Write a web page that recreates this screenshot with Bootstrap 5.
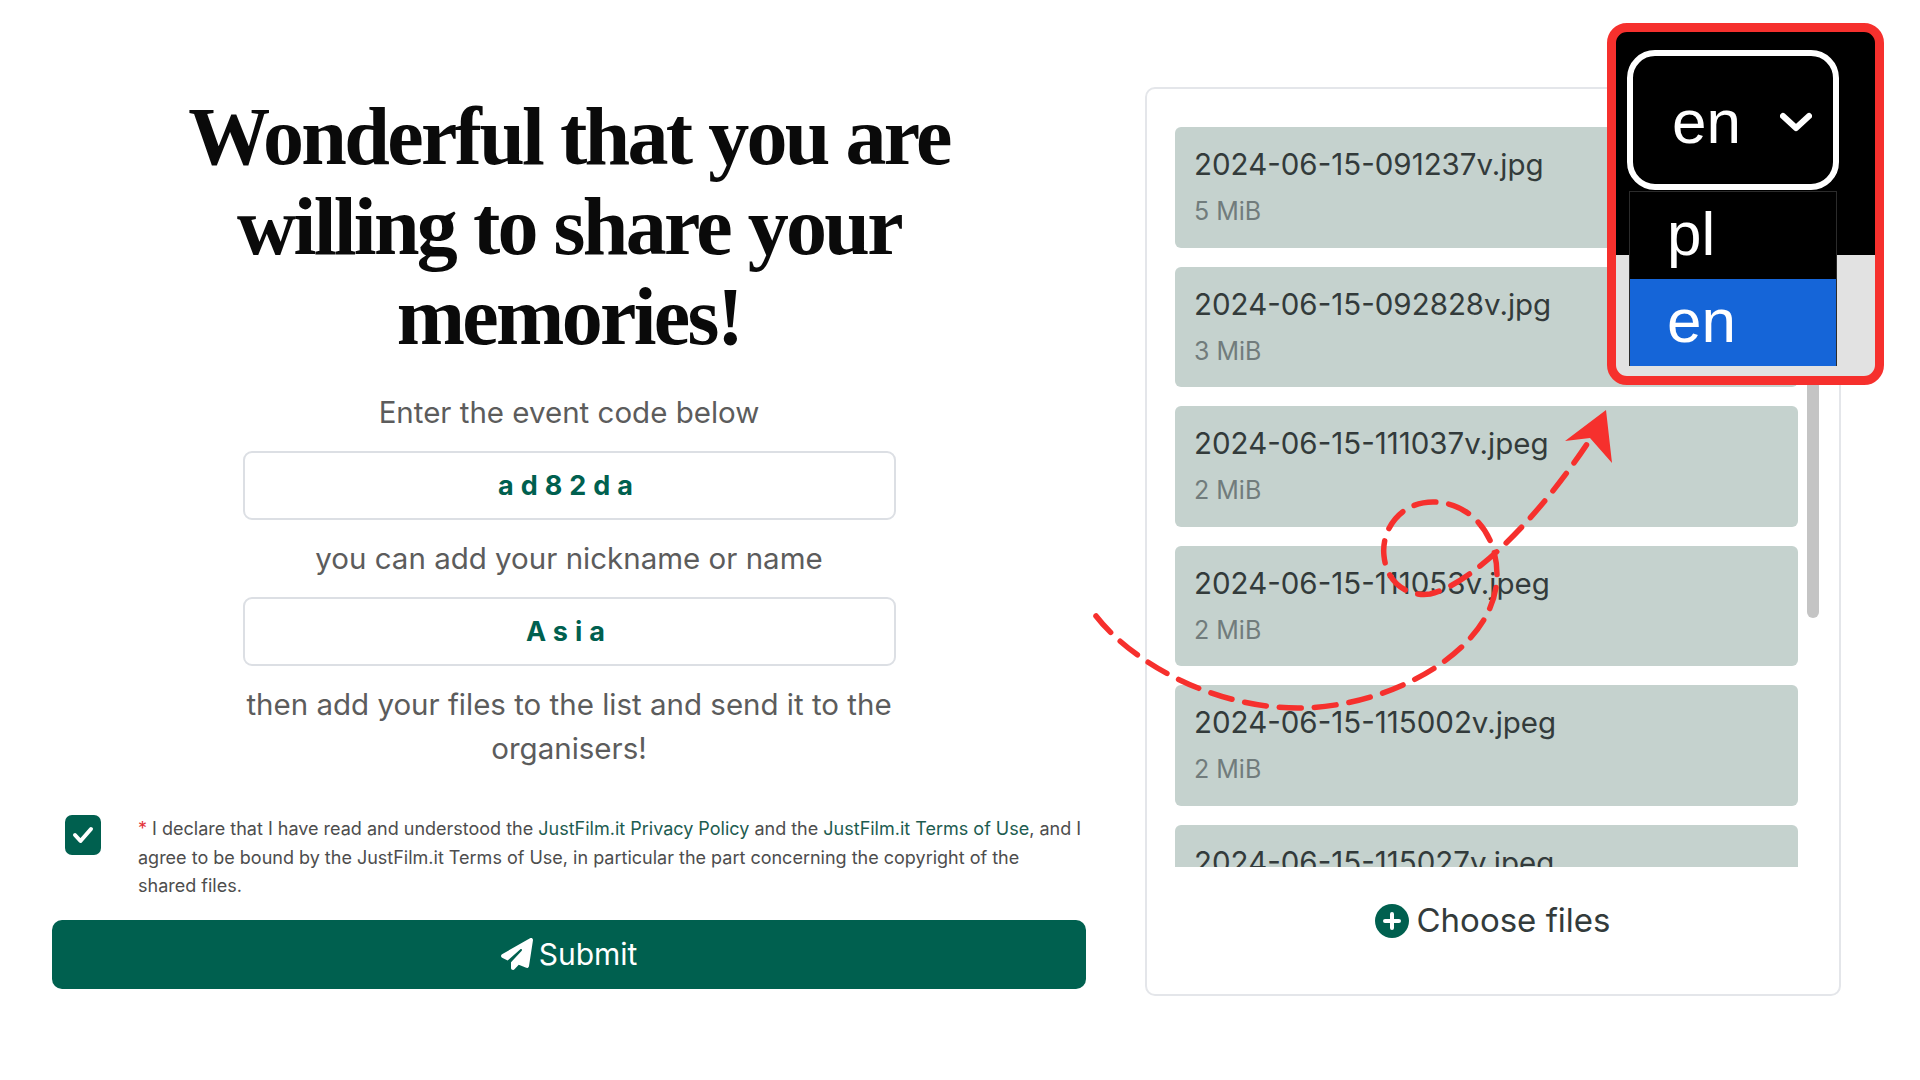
<!DOCTYPE html>
<html lang="en">
<head>
  <meta charset="UTF-8">
  <title>Share your memories</title>
  <link href="https://cdn.jsdelivr.net/npm/bootstrap@5.3.3/dist/css/bootstrap.min.css" rel="stylesheet">
  <style>
    body {
      background: #fff;
      font-family: "Inter", "Noto Sans", sans-serif;
      color: #5c5c5c;
      height: 1080px;
      overflow: hidden;
    }
    .page-wrap {
      padding: 87px 79px 0 52px;
      gap: 59px;
    }
    .share-col {
      width: 1034px;
      padding-top: 5px;
    }
    .share-title {
      font-family: "Liberation Serif", serif;
      font-weight: 700;
      font-size: 82px;
      line-height: 90px;
      letter-spacing: -2.7px;
      color: #0a0a0a;
      margin: 0 0 28px;
    }
    .share-hint {
      font-size: 29.5px;
      line-height: 44px;
      margin: 0;
    }
    .code-input.form-control {
      width: 653px;
      height: 69px;
      margin: 17px auto 16px;
      border-radius: 9px;
      text-align: center;
      font-size: 27px;
      font-weight: 700;
      letter-spacing: 7px;
      color: #00604f;
      border: 2px solid #dcdfe4;
    }
    .consent-row {
      margin-top: 45px;
      padding-left: 13px;
      gap: 37px;
    }
    .consent-box {
      width: 36px;
      height: 40px;
      background: #00604f;
      border-radius: 7px;
    }
    .consent-text {
      font-size: 18px;
      line-height: 28.5px;
      margin: 0;
      color: #4d4d4d;
    }
    .consent-text i {
      color: #e3333a;
      font-style: normal;
    }
    .consent-text a {
      color: #1d5c50;
      text-decoration: none;
    }
    .send-btn.btn {
      width: 100%;
      height: 69px;
      margin-top: 19px;
      background: #00604f;
      border: 0;
      border-radius: 10px;
      color: #fff;
      font-size: 30px;
      gap: 6px;
    }
    .files-panel {
      width: 696px;
      height: 909px;
      border: 2px solid #e4e6ea;
      border-radius: 10px;
      padding: 38px 20px 0 28px;
    }
    .files-scroll {
      height: 740px;
      gap: 9px;
    }
    .files-list {
      width: 624px;
      gap: 19px;
      overflow: hidden;
    }
    .file-item {
      flex: 0 0 120.6px;
      background: #c5d2ce;
      border-radius: 6px;
      padding: 19px 19px;
    }
    .file-name {
      font-size: 29.5px;
      line-height: 36px;
      color: #333b3b;
    }
    .file-size {
      font-size: 25px;
      line-height: 30px;
      margin-top: 14px;
      color: #717c7c;
    }
    .scroll-thumb {
      width: 12px;
      height: 491px;
      background: #c4c4c4;
      border-radius: 6px;
    }
    .choose-btn {
      margin-top: 29px;
      padding-right: 9px;
      gap: 8px;
      font-size: 33px;
      color: #333b3b;
    }
    .lang-frame {
      position: absolute;
      left: 1607px;
      top: 23px;
      width: 277px;
      height: 362px;
      border: 9px solid #f6302d;
      border-radius: 20px;
      overflow: hidden;
      background: linear-gradient(#000 223px, #e2e2e2 223px);
      font-family: "Liberation Sans", Arial, sans-serif;
      color: #fff;
      font-size: 62px;
      line-height: 1;
    }
    .lang-select {
      margin: 18px 0 0 11px;
      width: 212px;
      height: 140px;
      border: 6px solid #fff;
      border-radius: 28px;
      padding: 4px 21px 0 39px;
    }
    .lang-menu {
      margin: 1px 0 0 13px;
      width: 208px;
      border: solid #2b2b2b;
      border-width: 1px 1px 0;
    }
    .lang-opt {
      height: 87px;
      padding: 0 0 4px 37px;
      background: #000;
    }
    .lang-opt.is-active {
      background: #1565d8;
    }
    .arrow-layer {
      position: absolute;
      left: 0;
      top: 0;
      pointer-events: none;
    }
  </style>
</head>
<body>
  <div class="page-wrap d-flex align-items-start">
    <div class="share-col text-center">
      <h1 class="share-title">Wonderful that you are<br>willing to share your<br>memories!</h1>
      <p class="share-hint">Enter the event code below</p>
      <input type="text" class="form-control code-input" value="ad82da">
      <p class="share-hint">you can add your nickname or name</p>
      <input type="text" class="form-control code-input" value="Asia">
      <p class="share-hint">then add your files to the list and send it to the<br>organisers!</p>

      <div class="consent-row d-flex text-start">
        <div class="consent-box flex-shrink-0 d-flex align-items-center justify-content-center">
          <svg width="22" height="20" viewBox="0 0 22 20"><path d="M3 10l5.5 6L19 4" fill="none" stroke="#fff" stroke-width="4" stroke-linecap="round" stroke-linejoin="round"/></svg>
        </div>
        <p class="consent-text"><i>*</i> I declare that I have read and understood the <a href="#">JustFilm.it Privacy Policy</a> and the <a href="#">JustFilm.it Terms of Use</a>, and I agree to be bound by the JustFilm.it Terms of Use, in particular the part concerning the copyright of the<br>shared files.</p>
      </div>

      <button type="button" class="btn send-btn d-flex align-items-center justify-content-center">
        <svg width="32" height="32" viewBox="0 0 512 512"><path fill="#fff" d="M498.1 5.6c10.1 7 15.4 19.1 13.5 31.2l-64 416c-1.5 9.7-7.4 18.2-16 23s-18.9 5.4-28 1.6L284 427.7l-68.5 74.1c-8.9 9.7-22.9 12.9-35.2 8.1S160 493.2 160 480V396.4c0-4 1.5-7.8 4.2-10.7L331.8 202.8c5.8-6.3 5.6-16-.4-22s-15.7-6.4-22-.7L106 360.8 17.7 316.6C7.1 311.3 .3 300.7 0 288.9s5.9-22.8 16.1-28.7l448-256c10.7-6.1 23.9-5.5 34 1.4z"/></svg>
        Submit
      </button>
    </div>

    <div class="files-panel">
      <div class="files-scroll d-flex align-items-start">
        <div class="files-list d-flex flex-column h-100">
          <div class="file-item"><div class="file-name">2024-06-15-091237v.jpg</div><div class="file-size">5 MiB</div></div>
          <div class="file-item"><div class="file-name">2024-06-15-092828v.jpg</div><div class="file-size">3 MiB</div></div>
          <div class="file-item"><div class="file-name">2024-06-15-111037v.jpeg</div><div class="file-size">2 MiB</div></div>
          <div class="file-item"><div class="file-name">2024-06-15-111053v.jpeg</div><div class="file-size">2 MiB</div></div>
          <div class="file-item"><div class="file-name">2024-06-15-115002v.jpeg</div><div class="file-size">2 MiB</div></div>
          <div class="file-item"><div class="file-name">2024-06-15-115027v.jpeg</div><div class="file-size">2 MiB</div></div>
        </div>
        <div class="scroll-thumb"></div>
      </div>
      <div class="choose-btn d-flex align-items-center justify-content-center">
        <svg width="34" height="34" viewBox="0 0 34 34"><circle cx="17" cy="17" r="17" fill="#00604f"/><path d="M17 10v14M10 17h14" stroke="#fff" stroke-width="4" stroke-linecap="round"/></svg>
        Choose files
      </div>
    </div>
  </div>

  <svg class="arrow-layer" width="1920" height="1080" viewBox="0 0 1920 1080">
    <path d="M1096 616C1130 660 1210 708 1298 708C1390 708 1497 650 1497 575C1497 530 1467 502 1433 502C1400 502 1381 530 1384 556C1387 585 1410 597 1430 594C1470 585 1540 520 1600 424" fill="none" stroke="#f6302d" stroke-width="5.5" stroke-dasharray="22 13" stroke-linecap="round"/>
    <path d="M1606 410L1565 441L1590 438L1612 463Z" fill="#f6302d"/>
  </svg>

  <div class="lang-frame">
    <div class="lang-select d-flex align-items-center justify-content-between">
      <span>en</span>
      <svg width="32" height="20" viewBox="0 0 32 20"><path d="M3 4l13 12L29 4" fill="none" stroke="#fff" stroke-width="6" stroke-linecap="round" stroke-linejoin="round"/></svg>
    </div>
    <div class="lang-menu">
      <div class="lang-opt d-flex align-items-center">pl</div>
      <div class="lang-opt is-active d-flex align-items-center">en</div>
    </div>
  </div>

  <script src="https://cdn.jsdelivr.net/npm/bootstrap@5.3.3/dist/js/bootstrap.bundle.min.js"></script>
</body>
</html>
